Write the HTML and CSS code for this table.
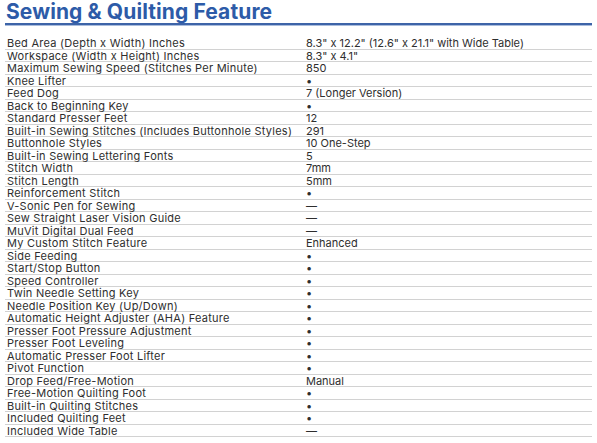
FILE: index.html
```html
<!DOCTYPE html>
<html>
<head>
<meta charset="utf-8">
<link rel="stylesheet" href="styles.css">
</head>
<body>
<div class="sheet">
  <h1 class="title">Sewing &amp; Quilting Feature</h1>
  <div class="rule"></div>
  <div class="table">
    <div class="row"><span class="k">Bed Area (Depth x Width) Inches</span><span class="v">8.3" x 12.2" (12.6" x 21.1" with Wide Table)</span></div>
    <div class="row"><span class="k">Workspace (Width x Height) Inches</span><span class="v">8.3" x 4.1"</span></div>
    <div class="row"><span class="k">Maximum Sewing Speed (Stitches Per Minute)</span><span class="v">850</span></div>
    <div class="row"><span class="k">Knee Lifter</span><span class="v">•</span></div>
    <div class="row"><span class="k">Feed Dog</span><span class="v">7 (Longer Version)</span></div>
    <div class="row"><span class="k">Back to Beginning Key</span><span class="v">•</span></div>
    <div class="row"><span class="k">Standard Presser Feet</span><span class="v">12</span></div>
    <div class="row"><span class="k">Built-in Sewing Stitches (Includes Buttonhole Styles)</span><span class="v">291</span></div>
    <div class="row"><span class="k">Buttonhole Styles</span><span class="v">10 One-Step</span></div>
    <div class="row"><span class="k">Built-in Sewing Lettering Fonts</span><span class="v">5</span></div>
    <div class="row"><span class="k">Stitch Width</span><span class="v">7mm</span></div>
    <div class="row"><span class="k">Stitch Length</span><span class="v">5mm</span></div>
    <div class="row"><span class="k">Reinforcement Stitch</span><span class="v">•</span></div>
    <div class="row"><span class="k">V-Sonic Pen for Sewing</span><span class="v">—</span></div>
    <div class="row"><span class="k">Sew Straight Laser Vision Guide</span><span class="v">—</span></div>
    <div class="row"><span class="k">MuVit Digital Dual Feed</span><span class="v">—</span></div>
    <div class="row"><span class="k">My Custom Stitch Feature</span><span class="v">Enhanced</span></div>
    <div class="row"><span class="k">Side Feeding</span><span class="v">•</span></div>
    <div class="row"><span class="k">Start/Stop Button</span><span class="v">•</span></div>
    <div class="row"><span class="k">Speed Controller</span><span class="v">•</span></div>
    <div class="row"><span class="k">Twin Needle Setting Key</span><span class="v">•</span></div>
    <div class="row"><span class="k">Needle Position Key (Up/Down)</span><span class="v">•</span></div>
    <div class="row"><span class="k">Automatic Height Adjuster (AHA) Feature</span><span class="v">•</span></div>
    <div class="row"><span class="k">Presser Foot Pressure Adjustment</span><span class="v">•</span></div>
    <div class="row"><span class="k">Presser Foot Leveling</span><span class="v">•</span></div>
    <div class="row"><span class="k">Automatic Presser Foot Lifter</span><span class="v">•</span></div>
    <div class="row"><span class="k">Pivot Function</span><span class="v">•</span></div>
    <div class="row"><span class="k">Drop Feed/Free-Motion</span><span class="v">Manual</span></div>
    <div class="row"><span class="k">Free-Motion Quilting Foot</span><span class="v">•</span></div>
    <div class="row"><span class="k">Built-in Quilting Stitches</span><span class="v">•</span></div>
    <div class="row"><span class="k">Included Quilting Feet</span><span class="v">•</span></div>
    <div class="row"><span class="k">Included Wide Table</span><span class="v">—</span></div>
  </div>
</div>
</body>
</html>
```

FILE: styles.css
```css
html, body {
  margin: 0;
  padding: 0;
  background: #ffffff;
}
.sheet {
  width: 587px;
  margin-left: 5px;
  font-family: Inter, "Open Sans", sans-serif;
  color: #2e2e2e;
}
.title {
  margin: 0;
  padding: 0 0 0 1px;
  font-family: Inter, sans-serif;
  font-weight: 700;
  font-size: 21px;
  line-height: 23px;
  color: #2d5ba8;
  letter-spacing: 0.1px;
}
.rule {
  height: 2px;
  background: #3d64a8;
  border-bottom: 1px solid #a9bcdc;
}
.table {
  display: flex;
  flex-direction: column;
  margin-top: 11px;
}
.row {
  display: grid;
  grid-template-columns: 300px 1fr;
  height: 11.5px;
  line-height: 12px;
  font-size: 11px;
  border-bottom: 1px solid #d2d2d2;
  white-space: nowrap;
}
.k {
  padding-left: 2px;
  letter-spacing: 0.25px;
}
.v {
  padding-left: 1px;
}
```
